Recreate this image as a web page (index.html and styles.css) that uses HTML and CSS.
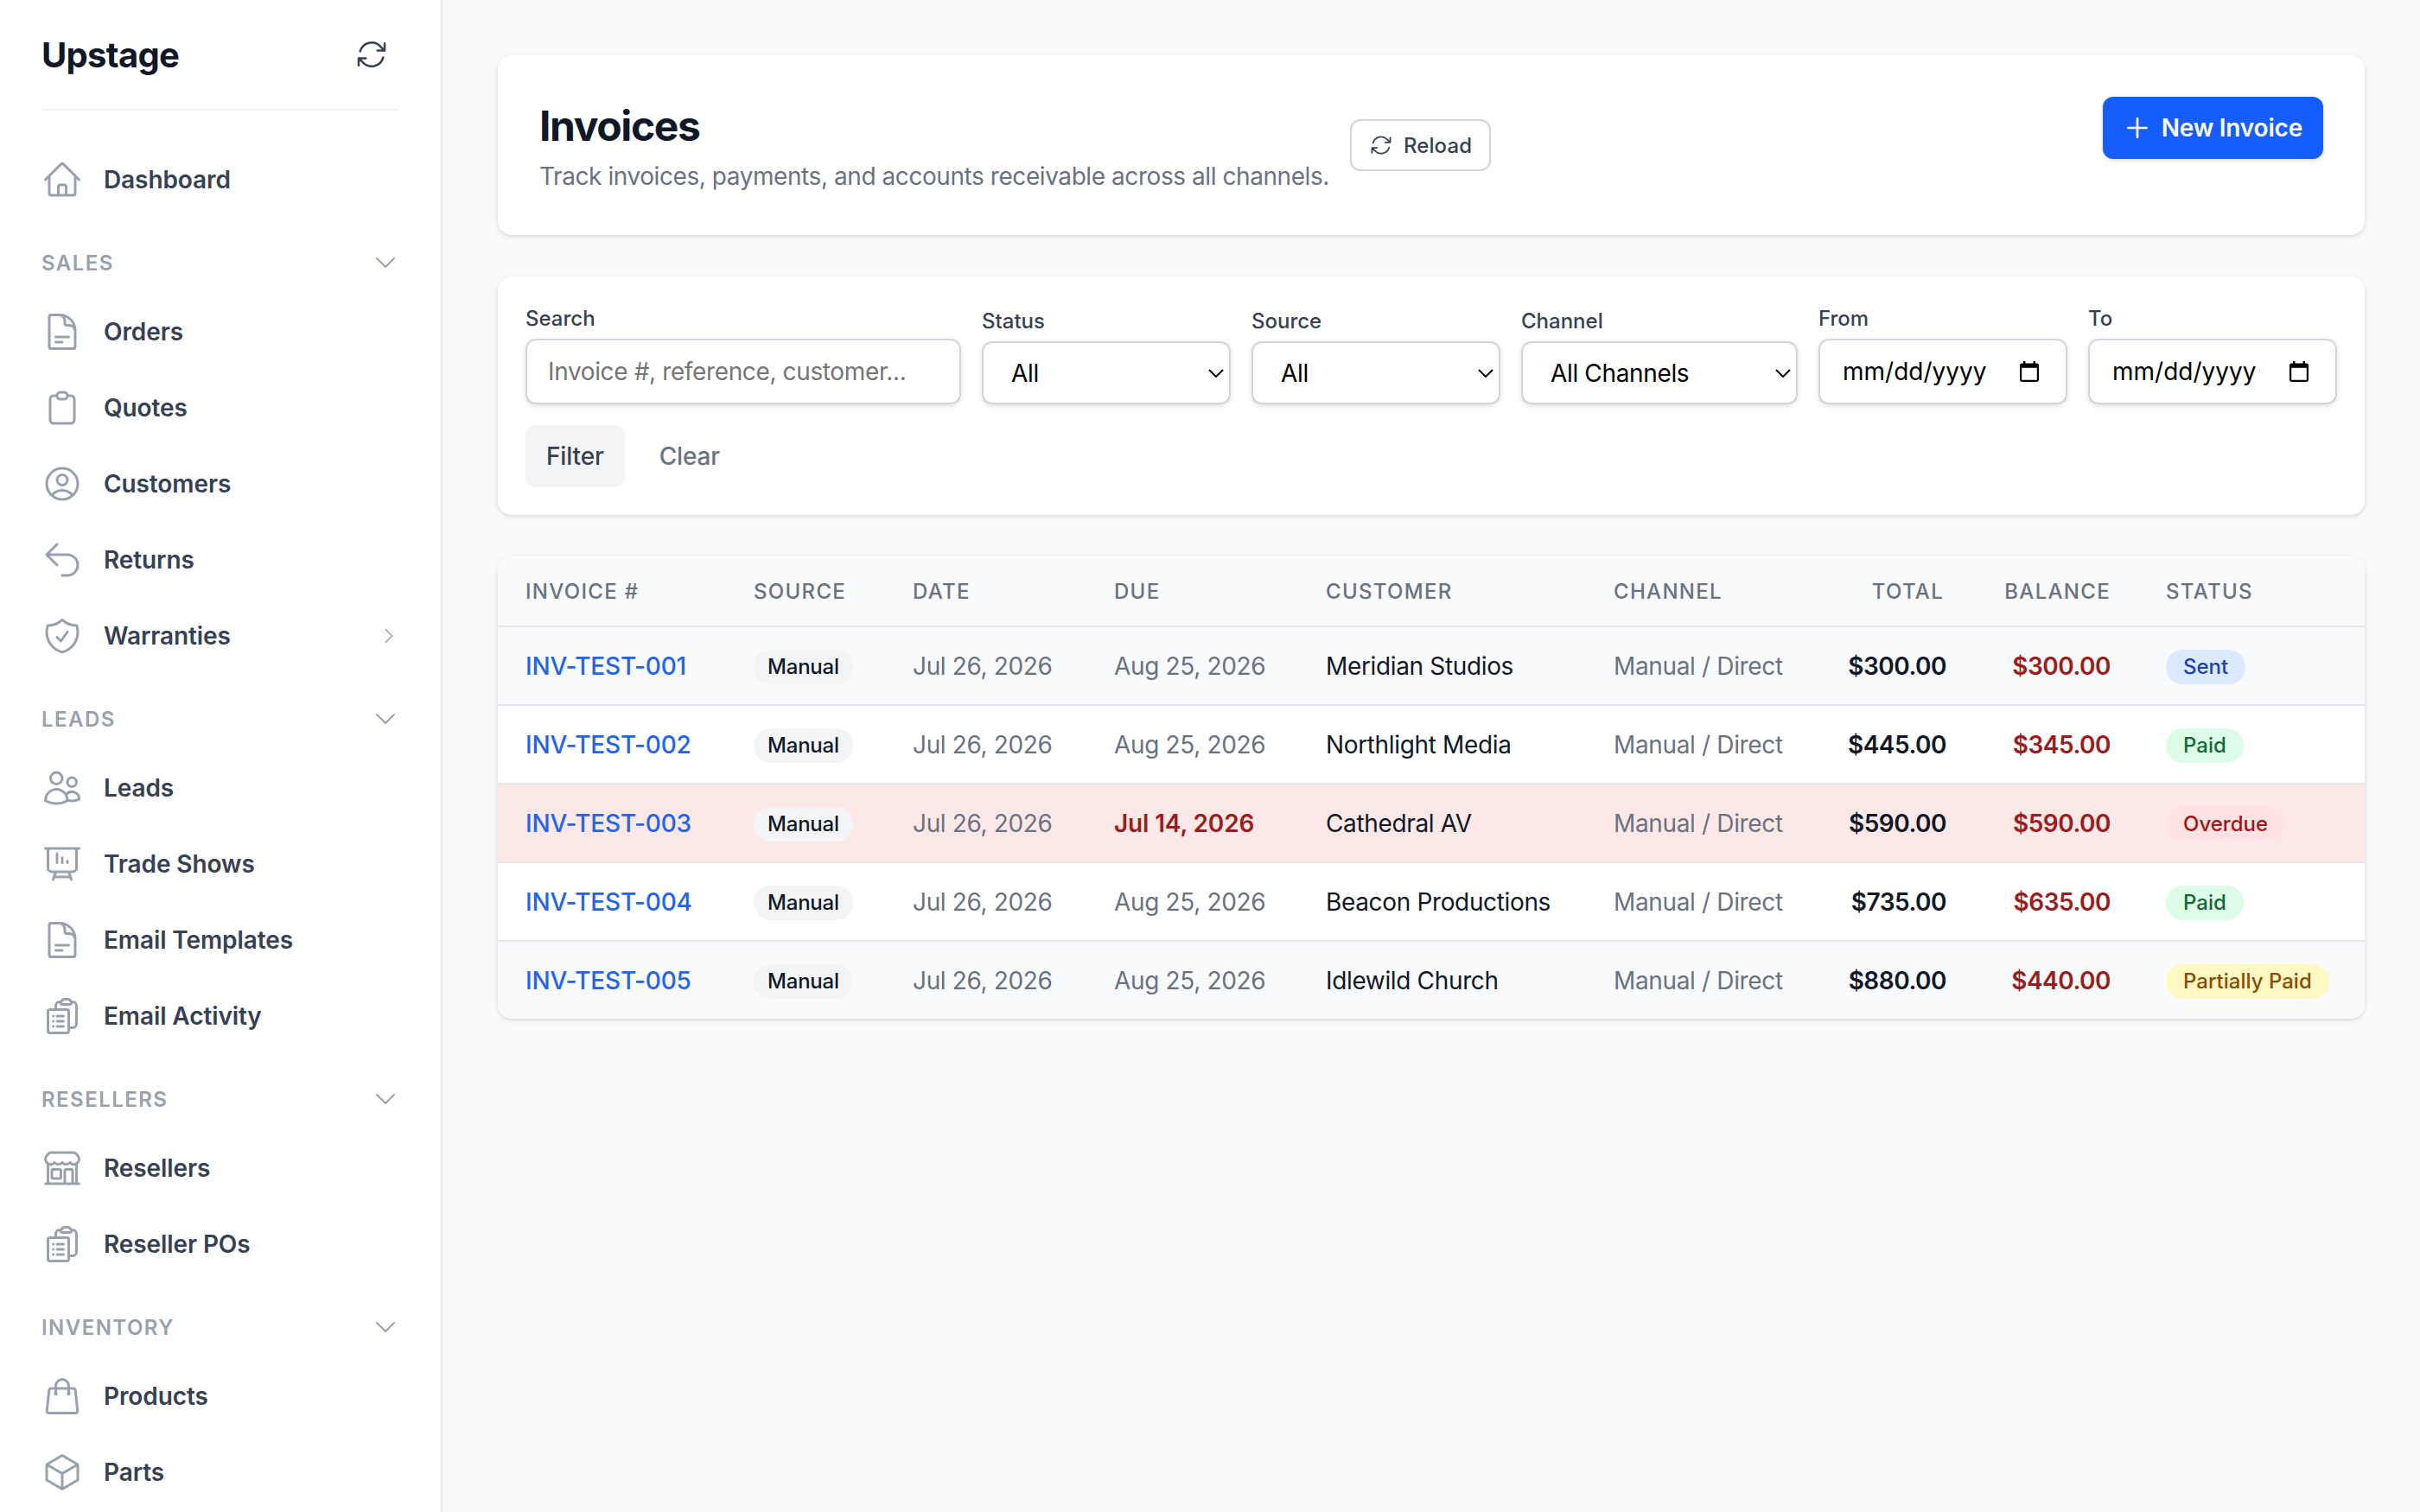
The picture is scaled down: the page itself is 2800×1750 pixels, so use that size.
FILE: index.html
```html
<!DOCTYPE html>
<html lang="en">
<head>
    <meta charset="UTF-8">
    <meta name="viewport" content="width=device-width, initial-scale=1.0">
    <title>Invoices - Upstage</title>
    <link rel="stylesheet" href="styles.css">
</head>
<body>

<!-- Icon set -->
<svg class="icon-set" xmlns="http://www.w3.org/2000/svg">
    <symbol id="i-refresh" viewBox="0 0 24 24"><path d="M16.023 9.348h4.992v-.001M2.985 19.644v-4.992m0 0h4.992m-4.993 0 3.181 3.183a8.25 8.25 0 0 0 13.803-3.7M4.031 9.865a8.25 8.25 0 0 1 13.803-3.7l3.181 3.182m0-4.991v4.99"/></symbol>
    <symbol id="i-home" viewBox="0 0 24 24"><path d="m2.25 12 8.954-8.955c.44-.439 1.152-.439 1.591 0L21.75 12M4.5 9.75v10.125c0 .621.504 1.125 1.125 1.125H9.75v-4.875c0-.621.504-1.125 1.125-1.125h2.25c.621 0 1.125.504 1.125 1.125V21h4.125c.621 0 1.125-.504 1.125-1.125V9.75M8.25 21h8.25"/></symbol>
    <symbol id="i-document" viewBox="0 0 24 24"><path d="M19.5 14.25v-2.625a3.375 3.375 0 0 0-3.375-3.375h-1.5A1.125 1.125 0 0 1 13.5 7.125v-1.5a3.375 3.375 0 0 0-3.375-3.375H8.25m0 12.75h7.5m-7.5 3H12M10.5 2.25H5.625c-.621 0-1.125.504-1.125 1.125v17.25c0 .621.504 1.125 1.125 1.125h12.75c.621 0 1.125-.504 1.125-1.125V11.25a9 9 0 0 0-9-9Z"/></symbol>
    <symbol id="i-clipboard" viewBox="0 0 24 24"><path d="M9 5H7a2 2 0 0 0-2 2v12a2 2 0 0 0 2 2h10a2 2 0 0 0 2-2V7a2 2 0 0 0-2-2h-2M9 5a2 2 0 0 0 2 2h2a2 2 0 0 0 2-2M9 5a2 2 0 0 1 2-2h2a2 2 0 0 1 2 2"/></symbol>
    <symbol id="i-user" viewBox="0 0 24 24"><path d="M17.982 18.725A7.488 7.488 0 0 0 12 15.75a7.488 7.488 0 0 0-5.982 2.975m11.963 0a9 9 0 1 0-11.963 0m11.963 0A8.966 8.966 0 0 1 12 21a8.966 8.966 0 0 1-5.982-2.275M15 9.75a3 3 0 1 1-6 0 3 3 0 0 1 6 0Z"/></symbol>
    <symbol id="i-return" viewBox="0 0 24 24"><path d="M9 15 3 9m0 0 6-6M3 9h12a6 6 0 0 1 0 12h-3"/></symbol>
    <symbol id="i-shield" viewBox="0 0 24 24"><path d="M9 12.75 11.25 15 15 9.75m-3-7.036A11.959 11.959 0 0 1 3.598 6 11.99 11.99 0 0 0 3 9.749c0 5.592 3.824 10.29 9 11.623 5.176-1.332 9-6.03 9-11.622 0-1.31-.21-2.571-.598-3.751h-.152c-3.196 0-6.1-1.248-8.25-3.285Z"/></symbol>
    <symbol id="i-users" viewBox="0 0 24 24"><path d="M15 19.128a9.38 9.38 0 0 0 2.625.372 9.337 9.337 0 0 0 4.121-.952 4.125 4.125 0 0 0-7.533-2.493M15 19.128v-.003c0-1.113-.285-2.16-.786-3.07M15 19.128v.106A12.318 12.318 0 0 1 8.624 21c-2.331 0-4.512-.645-6.374-1.766l-.001-.109a6.375 6.375 0 0 1 11.964-3.07M12 6.375a3.375 3.375 0 1 1-6.75 0 3.375 3.375 0 0 1 6.75 0Zm8.25 2.25a2.625 2.625 0 1 1-5.25 0 2.625 2.625 0 0 1 5.25 0Z"/></symbol>
    <symbol id="i-presentation" viewBox="0 0 24 24"><path d="M3.75 3v11.25A2.25 2.25 0 0 0 6 16.5h2.25M3.75 3h-1.5m1.5 0h16.5m0 0h1.5m-1.5 0v11.25A2.25 2.25 0 0 1 18 16.5h-2.25m-7.5 0h7.5m-7.5 0-1 3m8.5-3 1 3m0 0 .5 1.5m-.5-1.5h-9.5m0 0-.5 1.5M9 6v5.25m3-3v3m3-1v1"/></symbol>
    <symbol id="i-clipboard-list" viewBox="0 0 24 24"><path d="M9 12h3.75M9 15h3.75M9 18h3.75m3 .75H18a2.25 2.25 0 0 0 2.25-2.25V6.108c0-1.135-.845-2.098-1.976-2.192a48.424 48.424 0 0 0-1.123-.08m-5.801 0c-.065.21-.1.433-.1.664 0 .414.336.75.75.75h4.5a.75.75 0 0 0 .75-.75 2.25 2.25 0 0 0-.1-.664m-5.8 0A2.251 2.251 0 0 1 13.5 2.25H15c1.012 0 1.867.668 2.15 1.586m-5.8 0c-.376.023-.75.05-1.124.08C9.095 4.01 8.25 4.973 8.25 6.108V8.25m0 0H4.875c-.621 0-1.125.504-1.125 1.125v11.25c0 .621.504 1.125 1.125 1.125h9.75c.621 0 1.125-.504 1.125-1.125V9.375c0-.621-.504-1.125-1.125-1.125H8.25ZM6.75 12h.008v.008H6.75V12Zm0 3h.008v.008H6.75V15Zm0 3h.008v.008H6.75V18Z"/></symbol>
    <symbol id="i-store" viewBox="0 0 24 24"><path d="M13.5 21v-7.5a.75.75 0 0 1 .75-.75h3a.75.75 0 0 1 .75.75V21m-4.5 0H2.36m11.14 0H18m0 0h3.64m-1.39 0V9.349M3.75 21V9.349m0 0a3.001 3.001 0 0 0 3.75-.615A2.993 2.993 0 0 0 9.75 9.75c.896 0 1.7-.393 2.25-1.016a2.993 2.993 0 0 0 2.25 1.016c.896 0 1.7-.393 2.25-1.015a3.001 3.001 0 0 0 3.75.614m-16.5 0a3.004 3.004 0 0 1-.621-4.72l1.189-1.19A1.5 1.5 0 0 1 5.378 3h13.243a1.5 1.5 0 0 1 1.06.44l1.19 1.189a3 3 0 0 1-.621 4.72M6.75 18h3.75a.75.75 0 0 0 .75-.75V13.5a.75.75 0 0 0-.75-.75H6.75a.75.75 0 0 0-.75.75v3.75c0 .414.336.75.75.75Z"/></symbol>
    <symbol id="i-bag" viewBox="0 0 24 24"><path d="M15.75 10.5V6a3.75 3.75 0 1 0-7.5 0v4.5m11.356-1.993 1.263 12c.07.665-.45 1.243-1.119 1.243H4.25a1.125 1.125 0 0 1-1.12-1.243l1.264-12A1.125 1.125 0 0 1 5.513 7.5h12.974c.576 0 1.059.435 1.119 1.007ZM8.625 10.5a.375.375 0 1 1-.75 0 .375.375 0 0 1 .75 0Zm7.5 0a.375.375 0 1 1-.75 0 .375.375 0 0 1 .75 0Z"/></symbol>
    <symbol id="i-cube" viewBox="0 0 24 24"><path d="m21 7.5-9-5.25L3 7.5m18 0-9 5.25m9-5.25v9l-9 5.25M3 7.5l9 5.25M3 7.5v9l9 5.25m0-9v9"/></symbol>
    <symbol id="i-down" viewBox="0 0 24 24"><path d="m19.5 8.25-7.5 7.5-7.5-7.5"/></symbol>
    <symbol id="i-right" viewBox="0 0 24 24"><path d="m8.25 4.5 7.5 7.5-7.5 7.5"/></symbol>
    <symbol id="i-plus" viewBox="0 0 24 24"><path d="M12 4v16m8-8H4"/></symbol>
    <symbol id="i-caret" viewBox="0 0 18 10"><path d="m1 1 8 8 8-8"/></symbol>
    <symbol id="i-calendar" viewBox="0 0 22 24"><path fill-rule="evenodd" d="M4 0h2.4v2.4h9.2V0H18v2.4h1.6A2.4 2.4 0 0 1 22 4.800v16.8a2.4 2.4 0 0 1-2.4 2.4H2.4A2.4 2.4 0 0 1 0 21.6V4.8a2.4 2.4 0 0 1 2.4-2.4H4V0ZM2.200 7.8v14h17.6v-14H2.2Z"/></symbol>
</svg>

<div class="app">

    <!-- Sidebar -->
    <aside class="sidebar">
        <div class="sidebar-header">
            <span class="brand">Upstage</span>
            <button class="icon-button" aria-label="Refresh"><svg class="icon icon-40"><use href="#i-refresh"/></svg></button>
        </div>

        <nav class="nav">
            <a href="#" class="nav-link"><svg class="icon"><use href="#i-home"/></svg><span>Dashboard</span></a>

            <div class="nav-section"><span>Sales</span><svg class="icon icon-32"><use href="#i-down"/></svg></div>
            <a href="#" class="nav-link"><svg class="icon"><use href="#i-document"/></svg><span>Orders</span></a>
            <a href="#" class="nav-link"><svg class="icon"><use href="#i-clipboard"/></svg><span>Quotes</span></a>
            <a href="#" class="nav-link"><svg class="icon"><use href="#i-user"/></svg><span>Customers</span></a>
            <a href="#" class="nav-link"><svg class="icon"><use href="#i-return"/></svg><span>Returns</span></a>
            <a href="#" class="nav-link"><svg class="icon"><use href="#i-shield"/></svg><span>Warranties</span><svg class="icon icon-24 more"><use href="#i-right"/></svg></a>

            <div class="nav-section"><span>Leads</span><svg class="icon icon-32"><use href="#i-down"/></svg></div>
            <a href="#" class="nav-link"><svg class="icon"><use href="#i-users"/></svg><span>Leads</span></a>
            <a href="#" class="nav-link"><svg class="icon"><use href="#i-presentation"/></svg><span>Trade Shows</span></a>
            <a href="#" class="nav-link"><svg class="icon"><use href="#i-document"/></svg><span>Email Templates</span></a>
            <a href="#" class="nav-link"><svg class="icon"><use href="#i-clipboard-list"/></svg><span>Email Activity</span></a>

            <div class="nav-section"><span>Resellers</span><svg class="icon icon-32"><use href="#i-down"/></svg></div>
            <a href="#" class="nav-link"><svg class="icon"><use href="#i-store"/></svg><span>Resellers</span></a>
            <a href="#" class="nav-link"><svg class="icon"><use href="#i-clipboard-list"/></svg><span>Reseller POs</span></a>

            <div class="nav-section"><span>Inventory</span><svg class="icon icon-32"><use href="#i-down"/></svg></div>
            <a href="#" class="nav-link"><svg class="icon"><use href="#i-bag"/></svg><span>Products</span></a>
            <a href="#" class="nav-link"><svg class="icon"><use href="#i-cube"/></svg><span>Parts</span></a>
        </nav>
    </aside>

    <main class="main">

        <!-- Page header -->
        <section class="card page-header">
            <div class="page-title">
                <div>
                    <h1>Invoices</h1>
                    <p>Track invoices, payments, and accounts receivable across all channels.</p>
                </div>
                <button class="btn-reload"><svg class="icon icon-28"><use href="#i-refresh"/></svg><span>Reload</span></button>
            </div>
            <button class="btn-primary"><svg class="icon icon-32"><use href="#i-plus"/></svg>New Invoice</button>
        </section>

        <!-- Filters -->
        <form class="card filters">
            <div class="field field-search">
                <label for="search">Search</label>
                <input id="search" class="control" type="text" placeholder="Invoice #, reference, customer...">
            </div>
            <div class="field">
                <label for="status">Status</label>
                <div class="control select">
                    <select id="status"><option>All</option></select>
                    <svg class="caret"><use href="#i-caret"/></svg>
                </div>
            </div>
            <div class="field">
                <label for="source">Source</label>
                <div class="control select">
                    <select id="source"><option>All</option></select>
                    <svg class="caret"><use href="#i-caret"/></svg>
                </div>
            </div>
            <div class="field field-channel">
                <label for="channel">Channel</label>
                <div class="control select">
                    <select id="channel"><option>All Channels</option></select>
                    <svg class="caret"><use href="#i-caret"/></svg>
                </div>
            </div>
            <div class="field">
                <label>From</label>
                <div class="control date"><span>mm/dd/yyyy</span><svg class="calendar"><use href="#i-calendar"/></svg></div>
            </div>
            <div class="field">
                <label>To</label>
                <div class="control date"><span>mm/dd/yyyy</span><svg class="calendar"><use href="#i-calendar"/></svg></div>
            </div>
            <div class="filter-actions">
                <button type="button" class="btn-filter">Filter</button>
                <a href="#" class="btn-clear">Clear</a>
            </div>
        </form>

        <!-- Invoice table -->
        <section class="card table-card">
            <table>
                <colgroup>
                    <col class="col-invoice"><col class="col-source"><col class="col-date"><col class="col-due"><col class="col-customer">
                    <col class="col-channel"><col class="col-total"><col class="col-balance"><col>
                </colgroup>
                <thead>
                    <tr>
                        <th>Invoice #</th>
                        <th>Source</th>
                        <th>Date</th>
                        <th>Due</th>
                        <th>Customer</th>
                        <th>Channel</th>
                        <th class="num total">Total</th>
                        <th class="num">Balance</th>
                        <th>Status</th>
                    </tr>
                </thead>
                <tbody>
                    <tr class="shaded">
                        <td><a href="#">INV-TEST-001</a></td>
                        <td><span class="tag">Manual</span></td>
                        <td class="muted">Jul 26, 2026</td>
                        <td class="muted">Aug 25, 2026</td>
                        <td>Meridian Studios</td>
                        <td class="muted">Manual / Direct</td>
                        <td class="num">$300.00</td>
                        <td class="num balance">$300.00</td>
                        <td><span class="badge sent">Sent</span></td>
                    </tr>
                    <tr>
                        <td><a href="#">INV-TEST-002</a></td>
                        <td><span class="tag">Manual</span></td>
                        <td class="muted">Jul 26, 2026</td>
                        <td class="muted">Aug 25, 2026</td>
                        <td>Northlight Media</td>
                        <td class="muted">Manual / Direct</td>
                        <td class="num">$445.00</td>
                        <td class="num balance">$345.00</td>
                        <td><span class="badge paid">Paid</span></td>
                    </tr>
                    <tr class="late">
                        <td><a href="#">INV-TEST-003</a></td>
                        <td><span class="tag">Manual</span></td>
                        <td class="muted">Jul 26, 2026</td>
                        <td class="late-date">Jul 14, 2026</td>
                        <td>Cathedral AV</td>
                        <td class="muted">Manual / Direct</td>
                        <td class="num">$590.00</td>
                        <td class="num balance">$590.00</td>
                        <td><span class="badge overdue">Overdue</span></td>
                    </tr>
                    <tr>
                        <td><a href="#">INV-TEST-004</a></td>
                        <td><span class="tag">Manual</span></td>
                        <td class="muted">Jul 26, 2026</td>
                        <td class="muted">Aug 25, 2026</td>
                        <td>Beacon Productions</td>
                        <td class="muted">Manual / Direct</td>
                        <td class="num">$735.00</td>
                        <td class="num balance">$635.00</td>
                        <td><span class="badge paid">Paid</span></td>
                    </tr>
                    <tr class="shaded">
                        <td><a href="#">INV-TEST-005</a></td>
                        <td><span class="tag">Manual</span></td>
                        <td class="muted">Jul 26, 2026</td>
                        <td class="muted">Aug 25, 2026</td>
                        <td>Idlewild Church</td>
                        <td class="muted">Manual / Direct</td>
                        <td class="num">$880.00</td>
                        <td class="num balance">$440.00</td>
                        <td><span class="badge partial">Partially Paid</span></td>
                    </tr>
                </tbody>
            </table>
        </section>

    </main>
</div>

</body>
</html>
```
FILE: styles.css
```css
/* Base */
* {
    box-sizing: border-box;
}

body {
    margin: 0;
    background: #f9fafb;
    color: #101828;
    font-family: Inter, "Liberation Sans", sans-serif;
    font-size: 28px;
    line-height: 40px;
    letter-spacing: -0.35px;
}

a {
    text-decoration: none;
}

button,
input,
select {
    font: inherit;
    letter-spacing: inherit;
    margin: 0;
}

button {
    border: none;
    background: none;
    cursor: pointer;
}

.app {
    display: flex;
    height: 100vh;
    overflow: hidden;
}

/* Icons */
.icon-set {
    display: none;
}

.icon {
    width: 48px;
    height: 48px;
    flex-shrink: 0;
    fill: none;
    stroke: currentColor;
    stroke-width: 1.5;
    stroke-linecap: round;
    stroke-linejoin: round;
}

.icon-40 {
    width: 40px;
    height: 40px;
}

.icon-32 {
    width: 32px;
    height: 32px;
}

.icon-28 {
    width: 28px;
    height: 28px;
}

.icon-24 {
    width: 24px;
    height: 24px;
}

/* Sidebar */
.sidebar {
    width: 512px;
    flex-shrink: 0;
    padding: 0 48px;
    background: #fff;
    border-right: 2px solid #e5e7eb;
    overflow: hidden;
}

.sidebar-header {
    display: flex;
    align-items: center;
    justify-content: space-between;
    height: 128px;
    border-bottom: 2px solid #f3f4f6;
}

.brand {
    padding-top: 2px;
    font-size: 40px;
    font-weight: 700;
    letter-spacing: -0.7px;
}

.icon-button {
    display: flex;
    padding: 12px;
    color: #364153;
}

.nav {
    padding-top: 36px;
}

.nav-link {
    display: flex;
    align-items: center;
    gap: 24px;
    height: 88px;
    color: #364153;
    font-weight: 600;
    letter-spacing: -0.1px;
}

.nav-link .icon {
    color: #99a1af;
}

.nav-link .more {
    margin-left: auto;
}

.nav-section {
    display: flex;
    align-items: center;
    justify-content: space-between;
    height: 72px;
    margin-top: 16px;
    color: #99a1af;
    font-size: 24px;
    font-weight: 600;
    letter-spacing: 1.45px;
    text-transform: uppercase;
}

.nav-section span {
    padding-top: 2px;
}

/* Main column */
.main {
    flex: 1;
    display: flex;
    flex-direction: column;
    gap: 48px;
    padding: 64px;
}

.card {
    background: #fff;
    border-radius: 16px;
    box-shadow: 0 2px 6px rgba(0, 0, 0, 0.1), 0 2px 4px -2px rgba(0, 0, 0, 0.1);
}

/* Page header */
.page-header {
    display: flex;
    align-items: flex-start;
    justify-content: space-between;
    padding: 48px;
}

.page-title {
    display: flex;
    align-items: center;
    gap: 24px;
}

.page-title h1 {
    margin: 0 0 6px;
    padding-top: 2px;
    font-size: 48px;
    line-height: 64px;
    font-weight: 700;
    letter-spacing: -1.4px;
}

.page-title p {
    margin: 0;
    color: #6a7282;
    letter-spacing: -0.43px;
}

.btn-reload {
    display: flex;
    align-items: center;
    gap: 12px;
    height: 60px;
    padding: 0 20px;
    background: #fff;
    border: 2px solid #d1d5dc;
    border-radius: 12px;
    color: #364153;
    font-size: 24px;
    font-weight: 500;
    letter-spacing: 0.1px;
}

.btn-reload span {
    padding-top: 1px;
}

.btn-primary {
    display: flex;
    align-items: center;
    gap: 12px;
    height: 72px;
    padding: 0 24px;
    background: #155dfc;
    border-radius: 12px;
    box-shadow: 0 2px 6px rgba(0, 0, 0, 0.1), 0 2px 4px -2px rgba(0, 0, 0, 0.1);
    color: #fff;
    font-weight: 600;
    letter-spacing: -0.2px;
}

.btn-primary .icon {
    stroke-width: 2;
}

/* Filters */
.filters {
    display: flex;
    flex-wrap: wrap;
    align-items: flex-end;
    gap: 24px;
    padding: 32px;
}

.field {
    width: 288px;
}

.field-search {
    width: 504px;
}

.field-channel {
    width: 320px;
}

.field label {
    display: block;
    margin-bottom: 7px;
    padding-top: 1px;
    color: #364153;
    font-size: 24px;
    line-height: 32px;
    font-weight: 500;
    letter-spacing: 0;
}

.control {
    display: flex;
    align-items: center;
    width: 100%;
    height: 76px;
    background: #fff;
    border: 2px solid #d1d5dc;
    border-radius: 12px;
    box-shadow: 0 2px 6px rgba(0, 0, 0, 0.1), 0 2px 4px -2px rgba(0, 0, 0, 0.1);
    color: #000;
}

input.control {
    padding: 0 24px;
    letter-spacing: -0.37px;
}

input.control::placeholder {
    color: #757575;
}

.select {
    height: 73px;
    padding: 0 6px 0 32px;
}

.select select {
    flex: 1;
    min-width: 0;
    height: 100%;
    padding: 0;
    border: none;
    background: none;
    color: #000;
    appearance: none;
}

.caret {
    width: 18px;
    height: 10px;
    fill: none;
    stroke: #000;
    stroke-width: 2;
}

.date {
    justify-content: space-between;
    padding: 0 31px 0 26px;
    letter-spacing: 0;
}

.calendar {
    width: 22px;
    height: 24px;
    fill: #000;
}

.filter-actions {
    display: flex;
    gap: 16px;
    width: 100%;
}

.btn-filter,
.btn-clear {
    height: 72px;
    padding: 0 24px;
    border-radius: 12px;
    line-height: 72px;
    font-weight: 500;
    letter-spacing: -0.15px;
}

.btn-filter {
    background: #f3f4f6;
    color: #364153;
}

.btn-clear {
    color: #6a7282;
}

/* Invoice table */
.table-card {
    overflow: hidden;
}

table {
    width: 100%;
    table-layout: fixed;
    border-collapse: separate;
    border-spacing: 0;
}

.col-invoice { width: 264px; }
.col-source { width: 184px; }
.col-date { width: 233px; }
.col-due { width: 245px; }
.col-customer { width: 333px; }
.col-channel { width: 259px; }
.col-total { width: 190px; }
.col-balance { width: 190px; }

th,
td {
    padding: 0 32px;
    border-bottom: 2px solid #e5e7eb;
    text-align: left;
    white-space: nowrap;
}

th {
    height: 82px;
    padding-top: 2px;
    background: #f9fafb;
    color: #6a7282;
    font-size: 24px;
    font-weight: 500;
    letter-spacing: 1.3px;
    text-transform: uppercase;
}

th.total {
    padding-right: 35px;
}

td {
    height: 91px;
}

tbody tr:last-child td {
    height: 89px;
    border-bottom: none;
}

td a {
    color: #2563eb;
    font-weight: 500;
    letter-spacing: -0.2px;
}

.shaded {
    background: #f9fafb;
}

.late {
    background: #fde8e8;
}

.muted {
    color: #6a7282;
}

.late-date {
    color: #9b1c1c;
    font-weight: 600;
    letter-spacing: -0.15px;
}

.num {
    text-align: right;
}

td.num {
    font-weight: 600;
    letter-spacing: -0.5px;
}

.balance {
    color: #9b1c1c;
}

.tag,
.badge {
    display: inline-block;
    height: 40px;
    border-radius: 20px;
    font-size: 24px;
    font-weight: 500;
    letter-spacing: 0;
    vertical-align: middle;
}

.tag {
    padding: 0 16px;
    background: #f3f4f6;
    letter-spacing: -0.2px;
}

.badge {
    padding: 0 20px;
}

.sent {
    background: #dbeafe;
    color: #1e40af;
}

.paid {
    background: #dcfce7;
    color: #166534;
}

.overdue {
    background: #ffe2e2;
    color: #9f1616;
}

.partial {
    background: #fef9c2;
    color: #894b00;
}
```
